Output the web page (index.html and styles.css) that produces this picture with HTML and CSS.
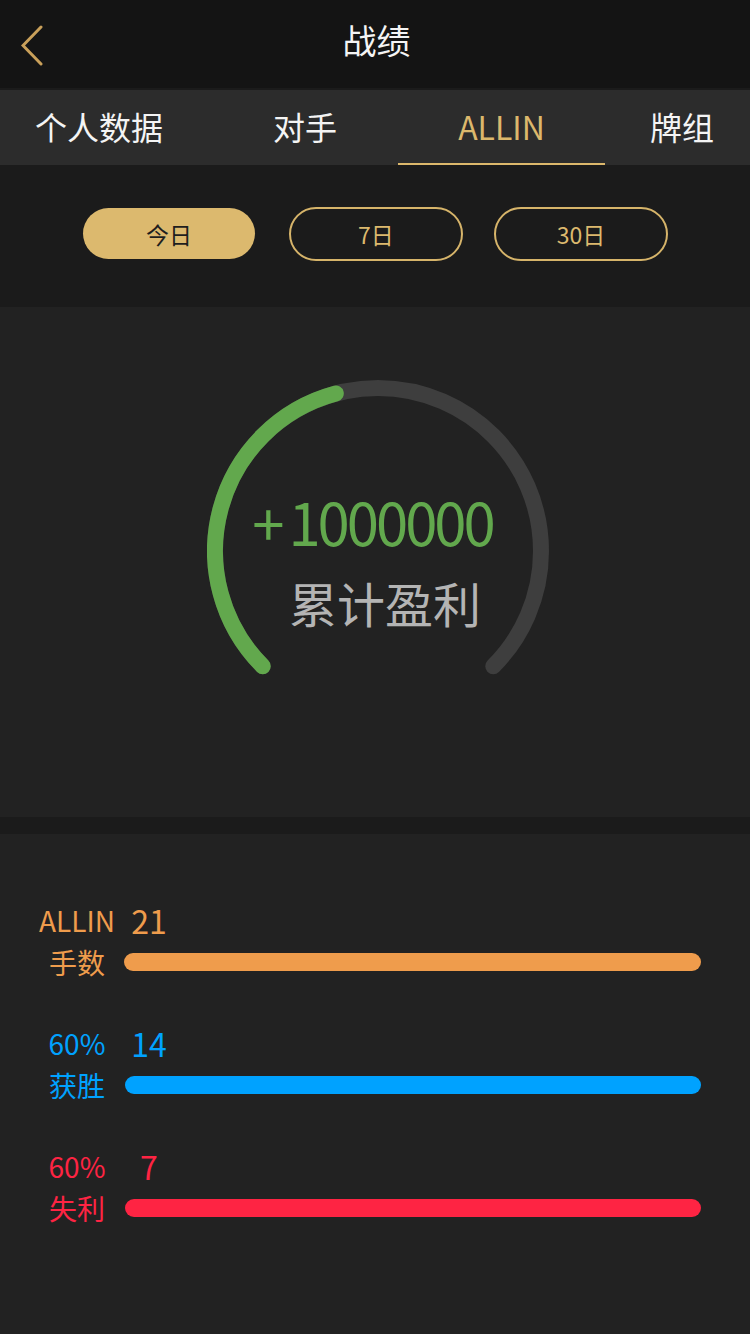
FILE: index.html
```html
<!DOCTYPE html>
<html lang="zh-CN">
<head>
<meta charset="utf-8">
<title>战绩</title>
<link rel="stylesheet" href="styles.css">
</head>
<body>
<div class="page">
  <header class="topbar">
    <div class="back">
      <svg width="24" height="42" viewBox="0 0 24 42"><polyline points="20,2 2,20.5 20,39" fill="none" stroke="#c9a05a" stroke-width="3" stroke-linecap="round" stroke-linejoin="miter"/></svg>
    </div>
    <h1 class="title">战绩</h1>
    <div class="spacer"></div>
  </header>

  <nav class="tabs">
    <div class="tab tab-1">个人数据</div>
    <div class="tab tab-2">对手</div>
    <div class="tab tab-3 active">ALLIN</div>
    <div class="tab tab-4">牌组</div>
  </nav>

  <section class="filters">
    <div class="pill pill-on">今日</div>
    <div class="pill">7日</div>
    <div class="pill">30日</div>
  </section>

  <section class="chart">
    <div class="gauge">
      <svg class="gauge-svg" width="342" height="342" viewBox="0 0 342 342">
        <path d="M 55.74 286.26 A 163 163 0 1 1 286.26 286.26" fill="none" stroke="#3e3e3e" stroke-width="16" stroke-linecap="round"/>
        <path d="M 55.74 286.26 A 163 163 0 0 1 128.81 13.55" fill="none" stroke="#62a84d" stroke-width="16" stroke-linecap="round"/>
      </svg>
      <div class="gauge-text">
        <div class="profit"><span class="sign">+</span>1000000</div>
        <div class="profit-label">累计盈利</div>
      </div>
    </div>
  </section>

  <section class="stats">
    <div class="stat orange">
      <div class="stat-label">ALLIN</div>
      <div class="stat-num">21</div>
      <div class="stat-label">手数</div>
      <div class="bar-track"><div class="bar" style="width:100%"></div></div>
    </div>
    <div class="stat blue">
      <div class="stat-label">60%</div>
      <div class="stat-num">14</div>
      <div class="stat-label">获胜</div>
      <div class="bar-track"><div class="bar" style="width:100%"></div></div>
    </div>
    <div class="stat red">
      <div class="stat-label">60%</div>
      <div class="stat-num">7</div>
      <div class="stat-label">失利</div>
      <div class="bar-track"><div class="bar" style="width:100%"></div></div>
    </div>
  </section>
</div>
</body>
</html>
```

FILE: styles.css
```css
* { box-sizing: border-box; margin: 0; padding: 0; }

html, body {
  width: 750px;
  height: 1334px;
  background: #1b1b1b;
  overflow: hidden;
}

body {
  font-family: "Noto Sans CJK SC", "Noto Sans", sans-serif;
  color: #f2f2f2;
}

.page {
  display: flex;
  flex-direction: column;
  height: 1334px;
}

/* header */
.topbar {
  height: 90px;
  background: #141414;
  border-bottom: 2px solid #1b1b1b;
  display: grid;
  grid-template-columns: 1fr auto 1fr;
  align-items: center;
}
.back {
  padding-left: 21px;
  display: flex;
  align-items: center;
  padding-top: 4px;
}
.back svg { display: block; }
.title {
  font-size: 34px;
  font-weight: normal;
  line-height: 76px;
  color: #f4f4f4;
  padding-bottom: 8px;
  padding-left: 3px;
}

/* tabs */
.tabs {
  height: 75px;
  background: #2c2c2c;
  display: flex;
  overflow: hidden;
}
.tab {
  font-size: 32px;
  line-height: 73px;
  text-align: center;
  flex: none;
  color: #f4f4f4;
  border-bottom: 2px solid transparent;
}
.tab-1 { width: 198px; }
.tab-2 { width: 200px; padding-left: 14px; }
.tab-3 { width: 207px; }
.tab-4 { width: 154px; }
.tab.active {
  color: #dcb86c;
  border-bottom-color: #dcb86c;
}

/* filters */
.filters {
  height: 142px;
  background: #1b1b1b;
  display: flex;
  align-items: center;
  padding-left: 83px;
  padding-bottom: 5px;
  gap: 31px;
}
.pill {
  width: 174px;
  height: 54px;
  border: 2px solid #d6b46a;
  border-radius: 27px;
  color: #dcb96e;
  font-size: 23px;
  display: flex;
  align-items: center;
  justify-content: center;
}
.pill-on {
  width: 172px;
  height: 51px;
  border: none;
  background: #dcb96e;
  color: #1e1e1e;
  margin-right: 3px;
}

/* chart */
.chart {
  height: 510px;
  background: #222222;
  padding-top: 73px;
  padding-left: 207px;
}
.gauge {
  position: relative;
  width: 342px;
  height: 342px;
}
.gauge-svg {
  position: absolute;
  left: 0;
  top: 0;
}
.gauge-text {
  position: absolute;
  left: 0;
  top: 0;
  width: 342px;
  padding-top: 106px;
  display: flex;
  flex-direction: column;
  align-items: center;
}
.profit {
  font-size: 58px;
  line-height: 70px;
  letter-spacing: -3px;
  color: #62a84d;
  padding-right: 11px;
}
.sign {
  margin-right: 7px;
}
.profit-label {
  margin-top: 16px;
  font-size: 48px;
  line-height: 60px;
  color: #b4b4b4;
  padding-left: 14px;
}

/* stats */
.stats {
  margin-top: 17px;
  flex: 1;
  background: #222222;
  padding-top: 66px;
  display: flex;
  flex-direction: column;
  gap: 39px;
}
.stat {
  display: grid;
  grid-template-columns: 124px 1fr;
  grid-template-rows: 40px 44px;
  align-items: center;
  padding-right: 49px;
}
.stat-label {
  font-size: 28px;
  line-height: 40px;
  text-align: center;
  padding-left: 30px;
}
.stat-num {
  font-size: 32px;
  line-height: 40px;
  width: 50px;
  text-align: center;
}
.bar-track {
  height: 18px;
  border-radius: 9px;
}
.bar {
  height: 18px;
  border-radius: 9px;
}
.orange { color: #ef9c4c; }
.orange .bar { background: #ef9c4c; }
.blue { color: #00a2ff; }
.blue .bar { background: #00a2ff; }
.blue .bar-track { margin-left: 1px; }
.red { color: #fe2443; }
.red .bar { background: #fe2443; }
.red .bar-track { margin-left: 1px; }
```
